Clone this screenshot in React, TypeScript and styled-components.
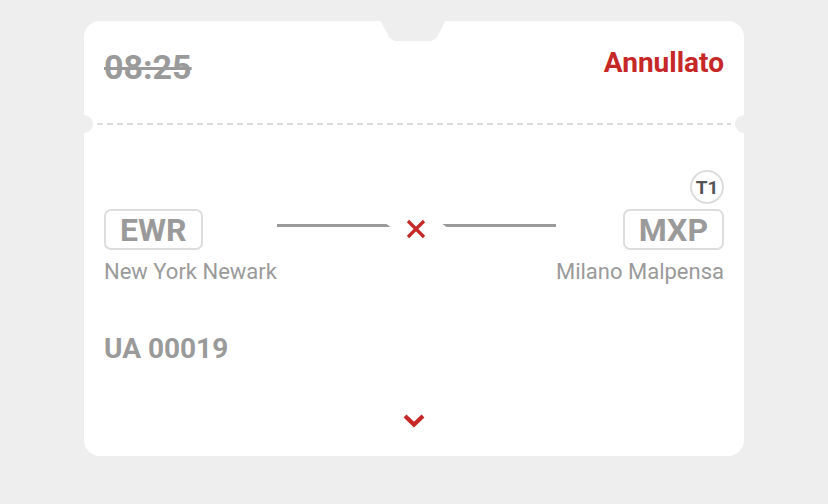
import React from 'react';
import styled, { createGlobalStyle } from 'styled-components';

const GlobalStyle = createGlobalStyle`
  html, body {
    margin: 0;
    padding: 0;
    background: #eeeeee;
    font-family: Roboto, 'Liberation Sans', sans-serif;
  }
`;

const Page = styled.div`
  width: 828px;
  height: 504px;
  padding-top: 21px;
  box-sizing: border-box;
`;

const Card = styled.div`
  position: relative;
  width: 660px;
  margin: 0 auto;
  padding: 0 20px 28px;
  box-sizing: border-box;
  background: #fff;
  border-radius: 16px;
`;

const Notch = styled.svg`
  position: absolute;
  top: -1px;
  left: 296px;
`;

const Header = styled.div`
  display: flex;
  justify-content: space-between;
  align-items: flex-start;
  padding-top: 26px;
`;

const Time = styled.div`
  font-size: 34px;
  line-height: 40px;
  font-weight: 700;
  color: #9a9a9a;
  text-decoration: line-through;
  text-decoration-thickness: 3px;
`;

const Status = styled.div`
  font-size: 28px;
  line-height: 32px;
  font-weight: 700;
  color: #c62828;
`;

const Divider = styled.div`
  position: relative;
  margin: 36px -7px 0;
  height: 2px;
  background: repeating-linear-gradient(to right, #dcdcdc 0 6px, transparent 6px 10px);

  &::before,
  &::after {
    content: '';
    position: absolute;
    top: -8px;
    width: 18px;
    height: 18px;
    border-radius: 50%;
    background: #eeeeee;
  }
  &::before { left: -22px; }
  &::after { right: -22px; }
`;

const TerminalRow = styled.div`
  display: flex;
  justify-content: flex-end;
  margin-top: 45px;
`;

const Terminal = styled.div`
  width: 34px;
  height: 34px;
  box-sizing: border-box;
  border: 2px solid #dddddd;
  border-radius: 50%;
  display: flex;
  align-items: center;
  justify-content: center;
  font-size: 19px;
  font-weight: 700;
  color: #555;
`;

const RouteRow = styled.div`
  display: flex;
  align-items: flex-start;
  margin-top: 5px;
`;

const Airport = styled.div<{ $align: 'start' | 'end' }>`
  display: flex;
  flex-direction: column;
  align-items: ${p => (p.$align === 'end' ? 'flex-end' : 'flex-start')};
`;

const Code = styled.div`
  height: 41px;
  box-sizing: border-box;
  padding: 0 14px;
  border: 2px solid #dddddd;
  border-radius: 7px;
  font-size: 32px;
  line-height: 39px;
  font-weight: 700;
  color: #9a9a9a;
`;

const City = styled.div`
  margin-top: 9px;
  font-size: 22px;
  line-height: 26px;
  color: #9a9a9a;
`;

const Path = styled.div`
  flex: 1;
  height: 41px;
  display: flex;
  align-items: center;
  gap: 16px;
`;

const Segment = styled.div<{ $side: 'left' | 'right' }>`
  flex: 1;
  height: 3px;
  margin-top: -8px;
  background: #9a9a9a;
  clip-path: ${p =>
    p.$side === 'left'
      ? 'polygon(0 0, calc(100% - 4px) 0, 100% 100%, 0 100%)'
      : 'polygon(0 0, 100% 0, 100% 100%, 4px 100%)'};
`;

const Cross = styled.svg`
  flex: none;
  margin-top: -2px;
`;

const Flight = styled.div`
  margin-top: 47px;
  font-size: 28px;
  line-height: 33px;
  font-weight: 700;
  color: #9a9a9a;
`;

const Toggle = styled.div`
  display: flex;
  justify-content: center;
  margin-top: 48px;
`;

export default function App() {
  return (
    <>
      <GlobalStyle />
      <Page>
        <Card>
          <Notch width='66' height='21' viewBox='0 0 66 21'>
            <path d='M0 0 H66 L58 15 Q55 21 49 21 H17 Q11 21 8 15 Z' fill='#eeeeee' />
          </Notch>
          <Header>
            <Time>08:25</Time>
            <Status>Annullato</Status>
          </Header>
          <Divider />
          <TerminalRow>
            <Terminal>T1</Terminal>
          </TerminalRow>
          <RouteRow>
            <Airport $align='start'>
              <Code>EWR</Code>
              <City>New York Newark</City>
            </Airport>
            <Path>
              <Segment $side='left' />
              <Cross width='20' height='20' viewBox='0 0 20 20'>
                <path d='M2 2 L18 18 M18 2 L2 18' stroke='#c62828' strokeWidth='3.2' />
              </Cross>
              <Segment $side='right' />
            </Path>
            <Airport $align='end'>
              <Code>MXP</Code>
              <City>Milano Malpensa</City>
            </Airport>
          </RouteRow>
          <Flight>UA 00019</Flight>
          <Toggle>
            <svg width='24' height='15' viewBox='0 0 24 15'>
              <path d='M3 3 L12 11.5 L21 3' fill='none' stroke='#c62828' strokeWidth='4.2' />
            </svg>
          </Toggle>
        </Card>
      </Page>
    </>
  );
}
